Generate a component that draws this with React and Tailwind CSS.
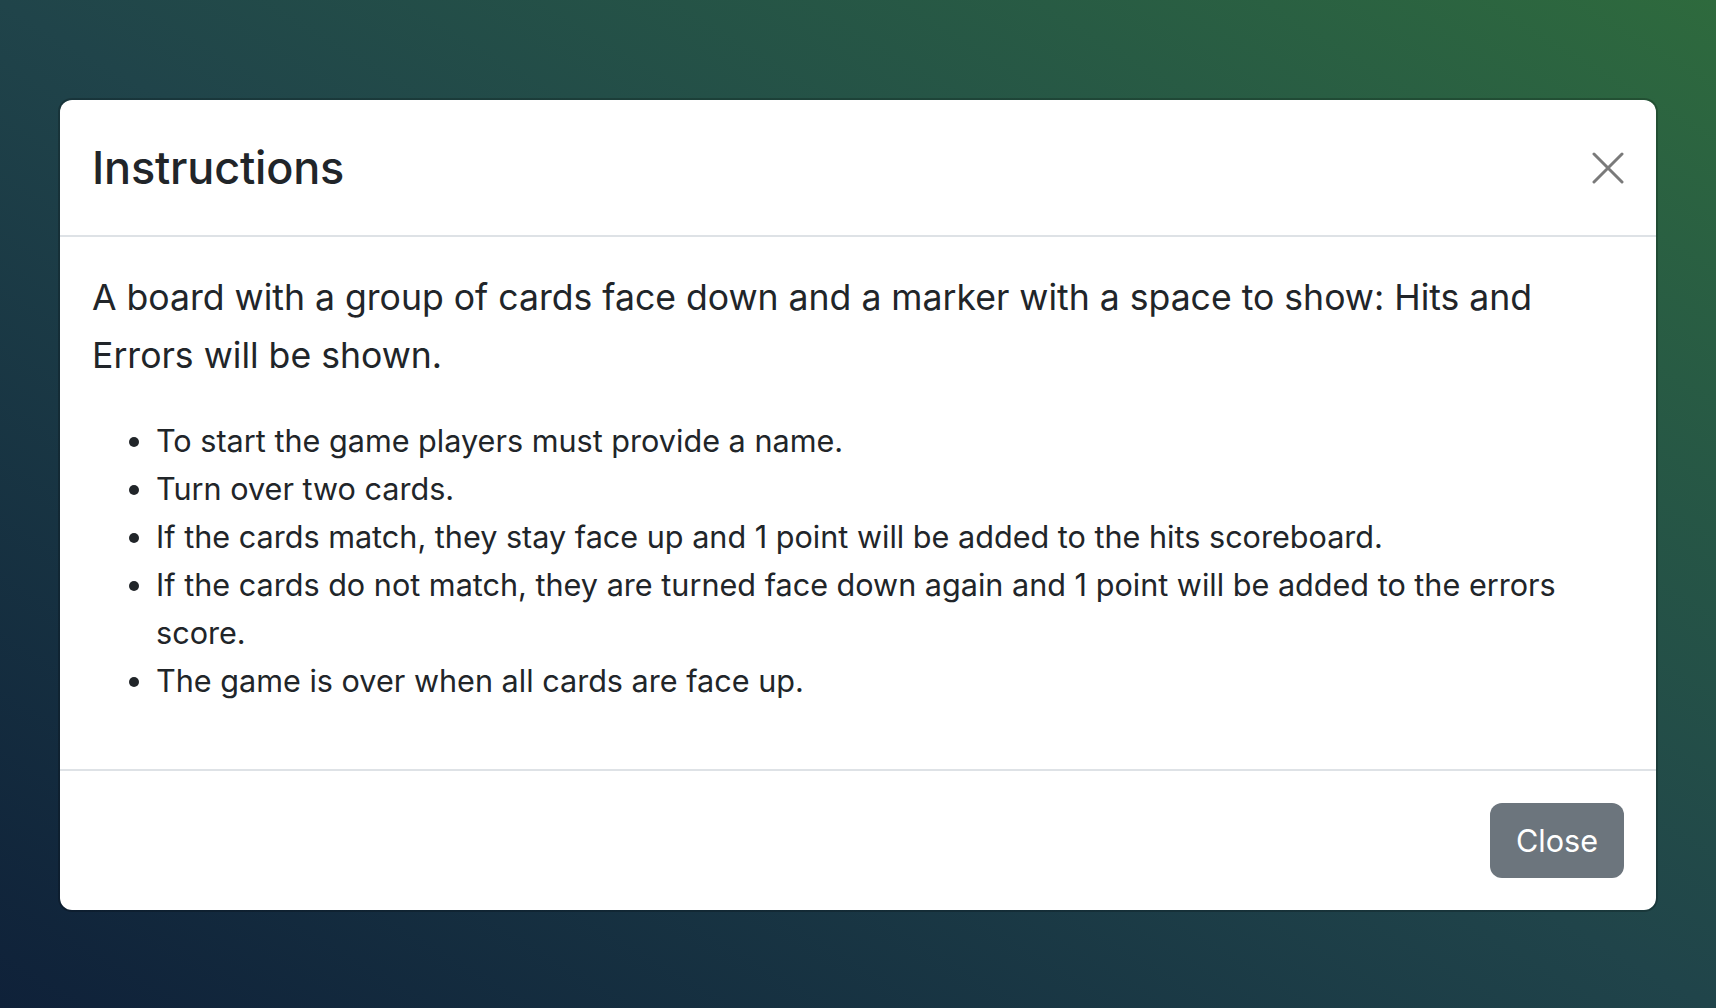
import React from 'react';

const steps = [
    'To start the game players must provide a name.',
    'Turn over two cards.',
    'If the cards match, they stay face up and 1 point will be added to the hits scoreboard.',
    'If the cards do not match, they are turned face down again and 1 point will be added to the errors score.',
    'The game is over when all cards are face up.',
];

const CloseIcon = () => (
    <svg viewBox="0 0 32 32" className="w-8 h-8" fill="none" stroke="currentColor" strokeWidth="3" strokeLinecap="round">
        <path d="M2 2 L30 30 M30 2 L2 30" />
    </svg>
);

const App = () => {
    return (
        <div className="min-h-screen w-full bg-linear-to-tr from-[#0f2139] via-[#20444a] to-[#2e6a3d] px-[58px] pt-[98px] pb-[96px] font-['Inter','Liberation_Sans',sans-serif] text-[#212529]">
            <div className="bg-white rounded-[14px] border-2 border-black/20 bg-clip-padding overflow-hidden">
                <div className="flex items-center justify-between h-[137px] px-[32px] border-b-2 border-[#dee2e6]">
                    <h5 className="text-[45px] leading-[1.2] font-medium tracking-[-0.2px]">Instructions</h5>
                    <button className="text-[#7a7a7a] hover:text-black">
                        <CloseIcon />
                    </button>
                </div>

                <div className="px-[32px] pt-[32px] pb-[32px]">
                    <p className="text-[35.6px] leading-[58px] mb-[32px]">
                        A board with a group of cards face down and a marker with a space to show: Hits and Errors will be shown.
                    </p>
                    <ul className="list-disc pl-[64px] mb-[32px] text-[30.6px] leading-[48px]">
                        {steps.map(step => (
                            <li key={step}>{step}</li>
                        ))}
                    </ul>
                </div>

                <div className="flex justify-end px-[32px] py-[32px] border-t-2 border-[#dee2e6]">
                    <button className="h-[75px] px-[26px] rounded-[12px] bg-[#6c757d] text-white text-[30.6px] leading-[48px]">
                        Close
                    </button>
                </div>
            </div>
        </div>
    );
};

export default App;
